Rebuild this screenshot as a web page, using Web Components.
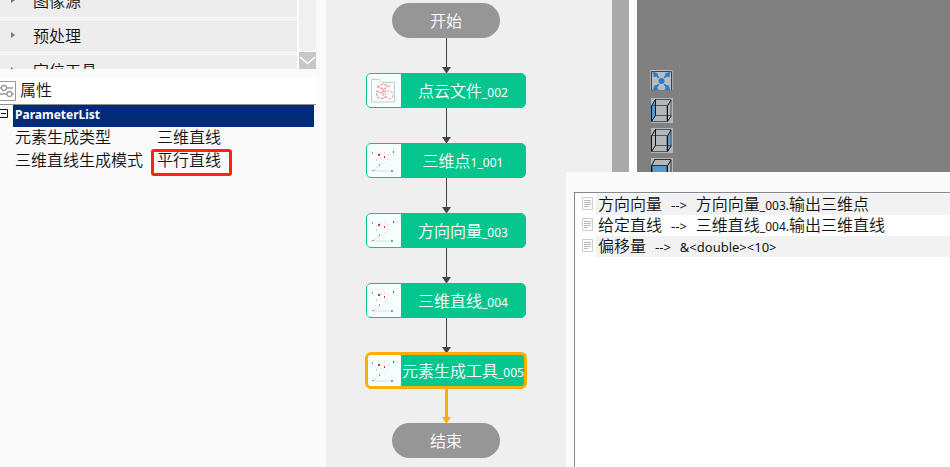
<!DOCTYPE html>
<html lang="zh-CN">
<head>
<meta charset="utf-8">
<title>流程编辑器</title>
<style>
html, body { margin: 0; height: 100%; overflow: hidden; }
body { font: 350 16px/22px "Noto Sans CJK SC", sans-serif; color: #111; background: #fafafa; }
</style>
</head>
<body>
<flow-app></flow-app>
<script>
function define(name, markup, setup) {
  const t = document.createElement('template');
  t.innerHTML = markup;
  customElements.define(name, class extends HTMLElement {
    constructor() {
      super();
      this.attachShadow({ mode: 'open' }).append(t.content.cloneNode(true));
    }
    connectedCallback() { if (setup) setup(this, this.shadowRoot); }
  });
}

define('tree-row', `
<style>
:host { display: block; height: 32px; background: #ededed; border: solid #fdfdfd; border-width: 1px 0; margin-bottom: 1px; }
button { display: flex; align-items: center; width: 100%; height: 32px; padding: 0 11px 2px; gap: 18px; border: 0; background: none; font: inherit; line-height: 20px; color: inherit; }
svg { flex: none; }
</style>
<button><svg width="4" height="6" viewBox="0 0 4 6"><path d="M0 0L4 3L0 6Z" fill="#777"/></svg><slot></slot></button>`);

define('tool-tree', `
<style>
:host { display: grid; grid-template-columns: 1fr 17px; gap: 2px; height: 69px; padding-right: 10px; overflow: hidden; background: #fafafa; }
.rows { margin-top: -16px; height: 85px; overflow: hidden; background: #ededed; }
.bar { display: flex; flex-direction: column; justify-content: space-between; background: #fafafa; }
.thumb { height: 51px; background: #f0f0f0; border-radius: 0 0 4px 4px; }
button { width: 17px; height: 17px; padding: 0; border: 0; background: #c8c6c8; display: block; }
svg { display: block; }
</style>
<div class="rows"><tree-row>图像源</tree-row><tree-row>预处理</tree-row><tree-row>定位工具</tree-row></div>
<div class="bar"><div class="thumb"></div><button aria-label="向下滚动"><svg width="17" height="17" viewBox="0 0 17 17"><path d="M1 5L8.500 11.500L16 5" fill="none" stroke="#fff" stroke-width="1.600"/></svg></button></div>`);

define('property-panel', `
<style>
:host { display: block; margin-right: 10px; background: #fafafa; }
header { display: flex; align-items: center; gap: 4px; height: 27px; margin-top: 8px; background: #fff; border-bottom: 1px solid #8f8f8f; }
h2 { margin: 0; font: inherit; padding-bottom: 3px; }
.group { display: grid; grid-template-columns: 13px 1fr; margin-right: 2px; }
.group button { width: 9px; height: 9px; margin-top: 4px; padding: 0; border: 0; background: none; }
svg { display: block; }
h3 { margin: 0; padding: 0 0 2px 2px; background: #002a7c; color: #fff; font: bold 12px/20px "Noto Sans", "Noto Sans CJK SC", sans-serif; }
table { border-collapse: collapse; margin-left: 15px; width: 299px; table-layout: fixed; line-height: 18px; }
th, td { padding: 0; font-weight: inherit; text-align: left; vertical-align: top; height: 23px; white-space: nowrap; }
th { width: 137px; }
td span { display: block; margin-left: 5px; }
td .marked { position: relative; }
.marked::after { content: ""; position: absolute; left: -6px; top: -1px; width: 75px; height: 21px; border: 3px solid #fb2412; border-radius: 3px; }
</style>
<header>
<svg width="16" height="20" viewBox="0 0 16 20" fill="none" stroke="#999"><path d="M0 .5H15.500V19.500H0"/><g stroke-width="1.300"><circle cx="4" cy="7" r="2.500"/><path d="M0 7H1.500M6.500 7H13M0 13H7M12 13H14"/><circle cx="9.500" cy="13" r="2.500"/></g></svg>
<h2>属性</h2></header>
<div class="group"><button aria-label="折叠"><svg width="9" height="9" viewBox="0 0 9 9"><path d="M0 .5H7.500V8.500H0M1 4.500H6" fill="none" stroke="#111"/></svg></button><h3>ParameterList</h3></div>
<table><tr><th scope="row">元素生成类型</th><td><span>三维直线</span></td></tr>
<tr><th scope="row">三维直线生成模式</th><td><span class="marked">平行直线</span></td></tr></table>`);

define('flow-end', `
<style>:host { display: flex; align-items: center; justify-content: center; box-sizing: border-box; padding-bottom: 2px; width: 108px; height: 35px; border-radius: 18px; background: #969696; color: #fff; }</style>
<slot></slot>`);

define('flow-arrow', `
<style>
:host { display: block; height: 35px; color: #444; }
:host([active]) { color: #fbad00; }
svg { display: block; }
:host([active]) .line { stroke-width: 3; }
</style>
<svg width="9" height="35" viewBox="0 0 9 35"><path class="line" d="M4.500 0V32" stroke="currentColor"/><path d="M0 29H9L4.500 35.500Z" fill="currentColor"/></svg>`);

const cloudIcon = `<svg width="34" height="33" viewBox="0 0 34 33" fill="none"><path d="M4.500 28V5.500H12L15 8.500H27.500V28Z" stroke="#c3cccc"/><g stroke="#f58f8f" stroke-width="1.100" stroke-dasharray="3 1"><path d="M10 13L16 10L22 12L17 15L10 13M16 15V24M9 17L14 19L20 16M10 19V23L15 25L20 22"/><circle cx="22" cy="21" r="4" stroke="#f8b5b5"/></g></svg>`;
const pointsIcon = `<svg width="34" height="33" viewBox="0 0 34 33"><path d="M6 27L13 21M6 27H25" fill="none" stroke="#d8dede"/><g fill="#999"><path d="M5 8h1v2H5zM5 26h2v1H5zM24 26h2v2H24zM12 20h1v2H12z"/></g><g fill="#e52730"><path d="M11 10h2v2H11zM17 12h1v2H17zM26 7h1v2H26z"/></g><g fill="#f7b9bd"><path d="M9 15h1v2H9zM13 14h1v1H13zM17 8h1v1H17zM21 10h1v1H21zM20 15h1v1H20zM18 18h1v1H18zM13 9h1v1H13z"/></g></svg>`;

define('flow-node', `
<style>
:host { display: grid; grid-template-columns: 34px 1fr; box-sizing: border-box; width: 160px; height: 35px; border: 1px solid #06c58d; border-radius: 5px; background: #06c58d; color: #fff; overflow: hidden; }
:host([selected]) { outline: 3px solid #fbad00; outline-offset: -2px; }
.icon { background: #f5fffd; }
.icon svg { display: block; }
.label { display: flex; align-items: baseline; justify-content: center; padding-top: 5px; white-space: nowrap; }
small { font: 400 12px/22px "Noto Sans", "Noto Sans CJK SC", sans-serif; }
</style>
<div class="icon"></div><div class="label"><slot></slot><small></small></div>`, (el, root) => {
  root.querySelector('.icon').innerHTML = el.getAttribute('icon') === 'cloud' ? cloudIcon : pointsIcon;
  root.querySelector('small').textContent = el.getAttribute('suffix');
});

define('flow-canvas', `
<style>
:host { display: grid; grid-template-columns: 1fr 17px 8px; background: #fff; overflow: hidden; }
.canvas { background: #efefef; padding: 3px 0 0 40px; }
.chain { display: flex; flex-direction: column; align-items: center; width: 160px; }
.bar { background: #a9a9a9; }
</style>
<div class="canvas"><div class="chain">
<flow-end>开始</flow-end><flow-arrow></flow-arrow>
<flow-node icon="cloud" suffix="_002">点云文件</flow-node><flow-arrow></flow-arrow>
<flow-node suffix="1_001">三维点</flow-node><flow-arrow></flow-arrow>
<flow-node suffix="_003">方向向量</flow-node><flow-arrow></flow-arrow>
<flow-node suffix="_004">三维直线</flow-node><flow-arrow></flow-arrow>
<flow-node suffix="_005" selected>元素生成工具</flow-node><flow-arrow active></flow-arrow>
<flow-end>结束</flow-end>
</div></div><div class="bar"></div>`);

define('view-panel', `
<style>
:host { display: flex; flex-direction: column; gap: 5px; padding: 68px 0 0 13px; background: #808080; overflow: hidden; }
button { flex: none; width: 24px; height: 25px; padding: 0; border: 0; background: none; }
button:first-child { height: 23px; }
svg { display: block; }
</style>
<button aria-label="适应窗口"><svg width="24" height="23" viewBox="0 0 24 23"><path d="M0 1H23V21H0Z" fill="#b7bcc0"/><path d="M1.500 21V2.500H21.500V21" fill="none" stroke="#444"/><path d="M0 1V21M23 1V21" stroke="#8d8d8d"/><g fill="#2b7bc5"><circle cx="11.500" cy="12" r="3"/><path stroke="#2b7bc5" stroke-width=".6" d="M3 3L8 5L7 6L9 8L8 9L6 7L4 8ZM20 3L15 5L16 6L14 8L15 9L17 7L19 8ZM3 21L5 16L6 17L8 15L9 16L7 18L8 21ZM20 21L18 16L17 17L15 15L14 16L16 18L15 21Z"/></g></svg></button>
<button aria-label="左视图"><svg width="24" height="25" viewBox="0 0 24 25"><path d="M1 0H23V25H1Z" fill="#b0b8bc"/><path d="M1.500 8L5 2V18L1.500 24Z" fill="#5599d8"/><path d="M5 1.500H21V17.500H5M2 7.500H17V23.500H2" fill="none" stroke="#555"/><path d="M5.500 1V17.500L1.500 23.500V8L5 2M21 2L17.500 8V23.500L21.500 17.500" fill="none" stroke="#111"/></svg></button>
<button aria-label="右视图"><svg width="24" height="25" viewBox="0 0 24 25"><path d="M1 0H23V25H1Z" fill="#b0b8bc"/><path d="M17.500 8L21.500 2V18L17.500 24Z" fill="#5599d8"/><path d="M5 1.500H21V17.500H5M2 7.500H17V23.500H2" fill="none" stroke="#555"/><path d="M5.500 1V17.500L1.500 23.500V8L5 2M21 2L17.500 8V23.500L21.500 17.500" fill="none" stroke="#111"/></svg></button>
<button aria-label="前视图"><svg width="24" height="25" viewBox="0 0 24 25"><path d="M1 0H23V25H1Z" fill="#b0b8bc"/><path d="M2 7.500H17V24H2Z" fill="#5599d8"/><path d="M5 1.500H21V18M2 7.500H17V23.500H2Z" fill="none" stroke="#333"/><path d="M5 1L1.500 8V24M21 2L17.500 8V24L21 18" fill="none" stroke="#111"/></svg></button>`);

define('binding-row', `
<style>
:host { display: grid; grid-template-columns: 11px 1fr; gap: 3px; height: 21px; padding-left: 7px; }
svg { display: block; margin-top: 3px; }
.text { display: flex; align-items: baseline; gap: 9px; height: 21px; padding-left: 2px; line-height: 19px; white-space: nowrap; }
:host(:nth-child(odd)) .text { background: #f2f2f2; }
.latin { font: 400 13px/19px "Noto Sans", "Noto Sans CJK SC", sans-serif; }
::slotted(small) { font: 400 12px/19px "Noto Sans", "Noto Sans CJK SC", sans-serif; }
::slotted(code) { font: 400 13px/19px "Noto Sans", "Noto Sans CJK SC", sans-serif; }
</style>
<svg width="11" height="13" viewBox="0 0 11 13" fill="none"><path d="M.5 .5H10.500V12.500H.5Z" fill="#fcfcfc" stroke="#cfcfcf"/><path d="M2 3.500H9M2 5.500H9M2 7.500H9M2 9.500H6" stroke="#bcbcbc"/></svg>
<div class="text"><slot name="from"></slot><span class="latin">--&gt;</span><span><slot></slot></span></div>`);

define('binding-dialog', `
<style>
:host { display: flex; background: #fafafa; padding: 20px 0 0 8px; }
.list { flex: 1; border: solid #828790; border-width: 1px 0 0 1px; background: #fff; padding-top: 1px; }
</style>
<div class="list">
<binding-row><span slot="from">方向向量</span>方向向量<small>_003.</small>输出三维点</binding-row>
<binding-row><span slot="from">给定直线</span>三维直线<small>_004.</small>输出三维直线</binding-row>
<binding-row><span slot="from">偏移量</span><code>&amp;&lt;double&gt;&lt;10&gt;</code></binding-row>
</div>`);

define('flow-app', `
<style>
:host { display: grid; grid-template-columns: 326px 311px 1fr; height: 100vh; position: relative; overflow: hidden; }
binding-dialog { position: absolute; left: 566px; right: 0; top: 172px; bottom: 0; }
</style>
<aside><tool-tree></tool-tree><property-panel></property-panel></aside>
<flow-canvas></flow-canvas>
<view-panel></view-panel>
<binding-dialog></binding-dialog>`);
</script>
</body>
</html>
